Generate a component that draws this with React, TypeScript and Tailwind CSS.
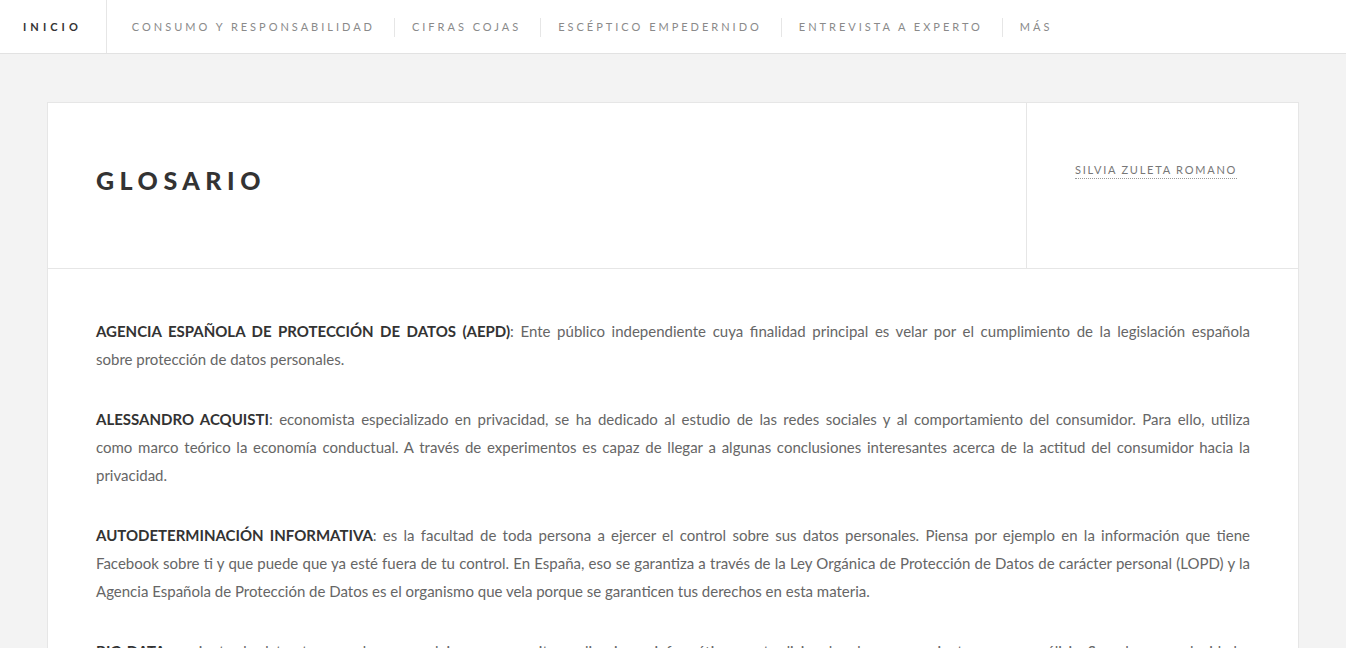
import React from "react";

const navItems = [
  "CONSUMO Y RESPONSABILIDAD",
  "CIFRAS COJAS",
  "ESCÉPTICO EMPEDERNIDO",
  "ENTREVISTA A EXPERTO",
  "MÁS",
];

type Line = { b?: string; t: string; last?: boolean };

const paragraphs: Line[][] = [
  [
    {
      b: "AGENCIA ESPAÑOLA DE PROTECCIÓN DE DATOS (AEPD)",
      t: ": Ente público independiente cuya finalidad principal es velar por el cumplimiento de la legislación española",
    },
    { t: "sobre protección de datos personales.", last: true },
  ],
  [
    {
      b: "ALESSANDRO ACQUISTI",
      t: ": economista especializado en privacidad, se ha dedicado al estudio de las redes sociales y al comportamiento del consumidor. Para ello, utiliza",
    },
    {
      t: "como marco teórico la economía conductual. A través de experimentos es capaz de llegar a algunas conclusiones interesantes acerca de la actitud del consumidor hacia la",
    },
    { t: "privacidad.", last: true },
  ],
  [
    {
      b: "AUTODETERMINACIÓN INFORMATIVA",
      t: ": es la facultad de toda persona a ejercer el control sobre sus datos personales. Piensa por ejemplo en la información que tiene",
    },
    {
      t: "Facebook sobre ti y que puede que ya esté fuera de tu control. En España, eso se garantiza a través de la Ley Orgánica de Protección de Datos de carácter personal (LOPD) y la",
    },
    {
      t: "Agencia Española de Protección de Datos es el organismo que vela porque se garanticen tus derechos en esta materia.",
      last: true,
    },
  ],
  [
    {
      b: "BIG DATA",
      t: ": conjunto de datos tan grandes y complejos que necesitan aplicaciones informáticas no tradicionales de procesamiento para su análisis. Su volumen, velocidad y variedad",
    },
    {
      t: "permiten obtener información muy valiosa sobre los hábitos, preferencias y comportamientos de los usuarios.",
      last: true,
    },
  ],
];

export default function App() {
  return (
    <div className="min-h-screen bg-[#f3f3f3]">
      <nav className="flex h-[54px] items-stretch border-b border-[#e2e2e2] bg-white">
        <div className="flex items-center border-r border-[#e6e6e6] pl-[23px] pr-[24px] pt-[2px] font-['Lato',sans-serif] text-[11px] font-bold tracking-[0.37em] text-[#333]">
          INICIO
        </div>
        <div className="flex items-center pl-[25px] pt-[2px]">
          {navItems.map((item, i) => (
            <React.Fragment key={item}>
              {i > 0 && <span className="h-[19px] w-px bg-[#e6e6e6]" />}
              <span
                className={`font-['Lato',sans-serif] text-[11px] tracking-[0.272em] text-[#8a8a8a] ${
                  i === 0 ? "pr-[19px]" : "pl-[17px] pr-[19px]"
                }`}
              >
                {item}
              </span>
            </React.Fragment>
          ))}
        </div>
      </nav>

      <div className="mx-[47px] mt-[48px] border border-[#e6e6e6] bg-white">
        <div className="flex h-[166px] border-b border-[#e6e6e6]">
          <div className="flex flex-1 items-center pb-[9px] pl-[48px]">
            <h1 className="font-['Lato',sans-serif] text-[25px] font-black tracking-[0.22em] text-[#333]">
              GLOSARIO
            </h1>
          </div>
          <div className="w-[272px] border-l border-[#e6e6e6] pl-[48px] pt-[53px]">
            <span className="border-b border-dotted border-[#999] pb-[2px] font-['Lato',sans-serif] text-[11px] tracking-[0.16em] text-[#777]">
              SILVIA ZULETA ROMANO
            </span>
          </div>
        </div>

        <div className="flex flex-col gap-[32px] px-[48px] pb-[48px] pt-[48px] font-['Lato',sans-serif] text-[15px] leading-[28px] text-[#666]">
          {paragraphs.map((p, pi) => (
            <div key={pi}>
              {p.map((l, li) => (
                <div
                  key={li}
                  className={
                    l.last
                      ? "text-left"
                      : "text-justify [text-align-last:justify]"
                  }
                >
                  {l.b && <strong className="font-bold text-[#333]">{l.b}</strong>}
                  {l.t}
                </div>
              ))}
            </div>
          ))}
        </div>
      </div>
    </div>
  );
}
